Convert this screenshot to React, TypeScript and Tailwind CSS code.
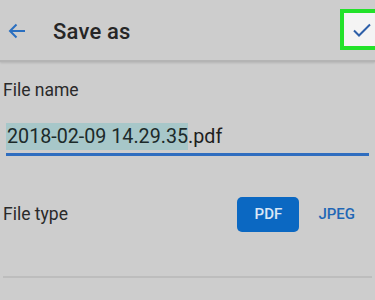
import React from "react";

export default function App() {
  return (
    <div className="w-[375px] h-[300px] bg-[#cdcdcd] overflow-hidden flex flex-col" style={{ fontFamily: "Roboto, 'Noto Sans', sans-serif" }}>
      <div className="h-[62px] shrink-0 flex items-center border-b-2 border-[#b4b4b4] shadow-[0_1px_2px_rgba(0,0,0,0.12)] relative">
        <div className="w-[53px] pl-[8px] pt-[2px] flex items-center">
          <svg width="18" height="16" viewBox="0 0 18 16" fill="none" stroke="#2a6fc0" strokeWidth="2">
            <path d="M17 8H2M8.5 1.5L2 8l6.5 6.5" />
          </svg>
        </div>
        <div className="text-[22px] font-medium text-[#262626] tracking-[0.2px] pt-[2px]">Save as</div>
        <div className="absolute left-[340px] top-[9px] w-[40px] h-[41px] border-[4px] border-[#22e22a] bg-[#f4f4f4] flex items-center pl-[9px]">
          <svg width="18" height="14" viewBox="0 0 18 14" fill="none" stroke="#2d5fa8" strokeWidth="2">
            <path d="M1 7.5l5 5L17 1.5" />
          </svg>
        </div>
      </div>
      <div className="pl-[3px] pt-[18px] text-[17.5px] text-[#2a2a2a] leading-[20px]">File name</div>
      <div className="mx-[6px] mt-[23px] border-b-[3px] border-[#2f6dbf] pb-[3px] flex">
        <span className="bg-[#a7c7c9] text-[19.7px] leading-[27px] text-[#1c2a2a] pl-[1px]">2018-02-09 14.29.35</span>
        <span className="text-[19.7px] leading-[27px] text-[#1e1e1e]">.pdf</span>
      </div>
      <div className="flex items-center mt-[41px] pl-[3px] pr-[20px] h-[35px]">
        <div className="text-[17.5px] text-[#2a2a2a] flex-1">File type</div>
        <div className="w-[62px] h-[35px] rounded-[5px] bg-[#0b68c2] text-white/85 text-[15px] font-medium flex items-center justify-center">PDF</div>
        <div className="ml-[19px] text-[#1f67b5] text-[15px] font-medium">JPEG</div>
      </div>
      <div className="mx-[3px] mt-[44px] h-[2px] bg-[#bdbdbd]" />
    </div>
  );
}
